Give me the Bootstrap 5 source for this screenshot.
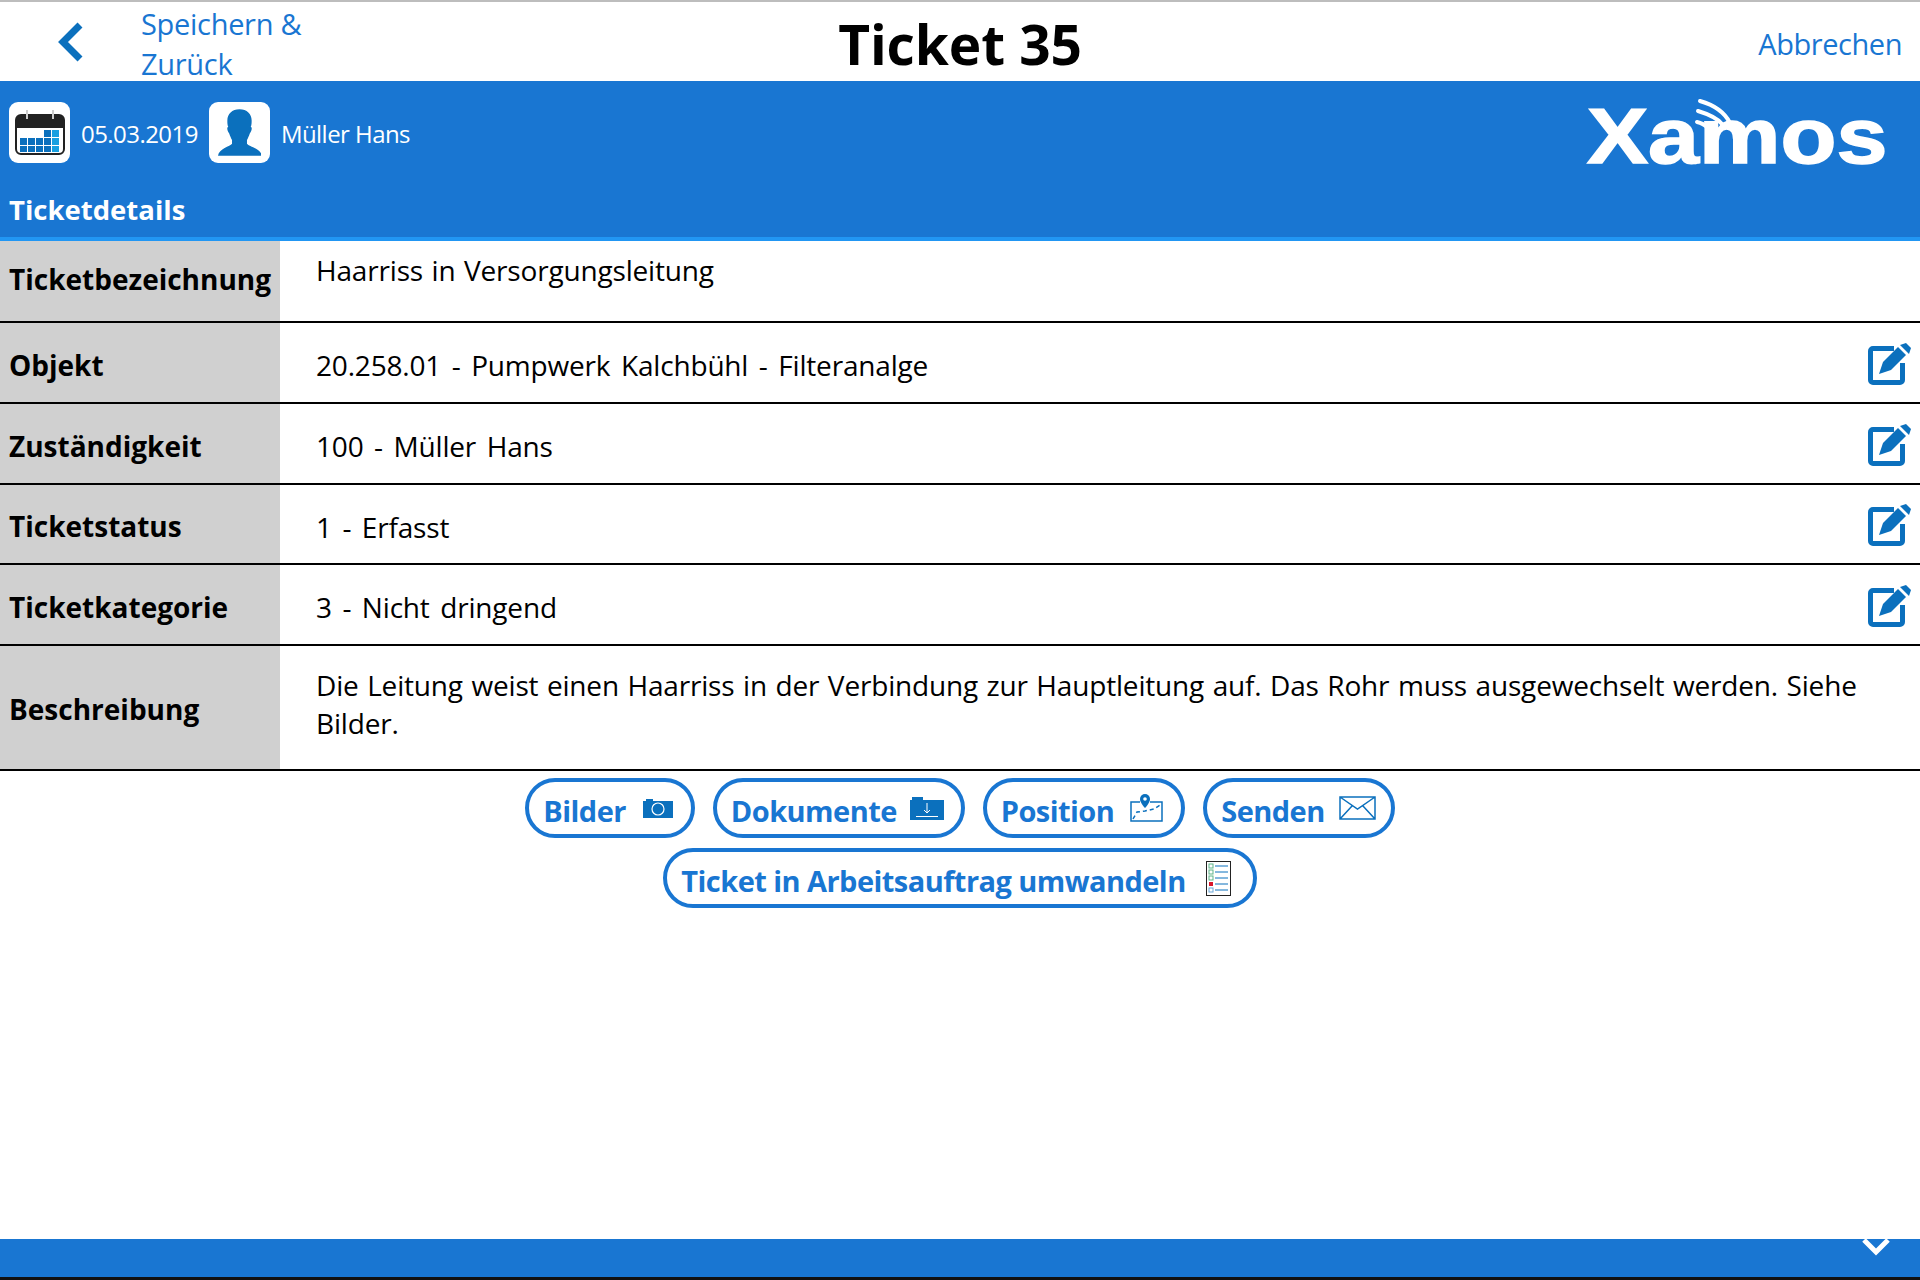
<!DOCTYPE html>
<html lang="de"><head><meta charset="utf-8"><title>Ticket 35</title>
<link href="https://cdn.jsdelivr.net/npm/bootstrap@5.3.0/dist/css/bootstrap.min.css" rel="stylesheet">
<style>
body{font-family:"Open Sans","Noto Sans","Liberation Sans",sans-serif;color:#000;background:#fff;height:1280px;overflow:hidden}
.app-shell{height:1280px;border-top:2px solid #bdbdbd;border-bottom:3px solid #111}
.top-bar{height:79px;flex:none}
.side-left,.side-right{width:420px;flex:none}
.back-zone{width:141px;padding-left:57px;flex:none}
.save-link{width:240px;font-size:29px;line-height:40px;color:#1976d2;text-decoration:none;margin-top:4px;letter-spacing:-.3px}
.cancel-link{font-size:29px;color:#1976d2;text-decoration:none;letter-spacing:-.45px;padding-right:18px;margin-top:4px;display:block;text-align:right}
.page-title{font-size:55px;font-weight:700;margin:4px 0 0;line-height:1;text-align:center;font-family:"Open Sans",sans-serif;letter-spacing:-.1px}
.blue-band{background:#1976d2;height:160px;border-bottom:4px solid #2196f3;color:#fff;flex:none}
.info-row{height:102px;padding:21px 34px 0 9px}
.tile{width:61px;height:61px;background:#fff;border-radius:9px}
.info-text{font-size:24px;margin:2px 11px 0 11px;letter-spacing:-.55px}
.logo-mark{margin-top:-3px;overflow:visible}
.section-title{font-size:27.500px;font-weight:700;padding:9px 0 0 9px;line-height:36px}
.detail-line{border-bottom:2px solid #000;flex:none}
.label-cell{width:280px;background:#d0d0d0;font-size:28px;font-weight:700;padding:4px 0 0 9px;flex:none}
.label-top{padding:0 0 4px 9px}
.label-desc{padding-top:2px}
.value-cell{font-size:28px;padding:0 8px 0 36px;line-height:38px;word-spacing:1.500px;letter-spacing:-.18px}
.value-top{padding-top:10px}
.value-desc{padding-bottom:7px;padding-right:10px}
.value-lift{margin-top:5px;word-spacing:3.500px}
.h-82{height:82px}.h-81{height:81px}.h-80{height:80px}.h-125{height:125px}
.action-btn{height:60px;border:4px solid #1976d2;border-radius:30px;color:#1976d2;font-size:29px;font-weight:700;padding:0 0 0 14px;background:#fff;letter-spacing:-.55px}
.action-btn span{margin-top:5px}
.btn-row{gap:18px}
.btn-stack{padding-top:7px;gap:10px}
.ico-cam{margin:0 18px 0 17px}
.ico-doc{margin:0 17px 0 13px}
.ico-pos{margin:0 18px 0 16px}
.ico-mail{margin:0 15px 0 14px}
.ico-list{margin:0 22px 0 20px}
.foot-band{background:#1976d2;height:38px;flex:none}
.chev{margin-right:29px}
</style></head>
<body>
<div class="app-shell d-flex flex-column">
  <div class="top-bar d-flex align-items-center">
    <div class="side-left d-flex align-items-center">
      <div class="back-zone"><svg width="30" height="40" viewBox="0 0 30 40" class="d-block"><path d="M23 3 6 20l17 17" fill="none" stroke="#0b70bd" stroke-width="7"/></svg></div>
      <a class="save-link" href="#">Speichern &amp; Zurück</a>
    </div>
    <h1 class="page-title flex-grow-1">Ticket 35</h1>
    <div class="side-right"><a class="cancel-link" href="#">Abbrechen</a></div>
  </div>

  <div class="blue-band">
    <div class="info-row d-flex align-items-start justify-content-between">
      <div class="d-flex align-items-center">
        <div class="tile d-flex align-items-center justify-content-center">
          <svg width="50" height="45" viewBox="0 0 50 45"><rect x="1" y="5" width="48" height="39" rx="5" fill="#fff" stroke="#222" stroke-width="2"/><path d="M1 10a5 5 0 0 1 5-5h38a5 5 0 0 1 5 5v8H1z" fill="#222"/><path d="M12 0v9M38 0v9" stroke="#ccc" stroke-width="2"/><g fill="#0b70bd"><rect x="5" y="28" width="7" height="7"/><rect x="13" y="28" width="7" height="7"/><rect x="21" y="28" width="7" height="7"/><rect x="29" y="28" width="7" height="7"/><rect x="5" y="36" width="7" height="6"/><rect x="13" y="36" width="7" height="6"/><rect x="21" y="36" width="7" height="6"/><rect x="29" y="36" width="7" height="6"/><rect x="29" y="20" width="7" height="7"/></g><g fill="#17a0e0"><rect x="37" y="20" width="7" height="7"/><rect x="37" y="28" width="7" height="7"/><rect x="37" y="36" width="7" height="6"/></g></svg>
        </div>
        <span class="info-text">05.03.2019</span>
        <div class="tile d-flex align-items-center justify-content-center">
          <svg width="43" height="49" viewBox="0 0 46 50"><path d="M23 0c8 0 13 5 13 12 0 3 0 5-1 7 2 0 1 5-1 7-1 3-2 5-3 7v4c2 3 15 5 16 13H0c1-8 13-10 15-13v-4c-1-2-2-4-3-7-2-2-3-7-1-7-1-2-1-4-1-7C10 5 15 0 23 0z" fill="#0b70bd"/></svg>
        </div>
        <span class="info-text">Müller Hans</span>
      </div>
      <svg width="299" height="76" viewBox="0 0 299 76" class="logo-mark">
        <text transform="scale(1.190 1)" x="0" y="64" font-family="Liberation Sans" font-weight="700" font-size="77" stroke="#fff" stroke-width="1.500" fill="#fff">Xamos</text>
        <g fill="none" stroke="#fff" stroke-width="4" stroke-linecap="round"><path d="M113 2c14 4 25 12 30 22"/><path d="M111 12c10 3 18 6 24 13"/><path d="M110 23c5 1 8 3 11 6"/></g>
      </svg>
    </div>
    <div class="section-title">Ticketdetails</div>
  </div>

  <div class="detail-line d-flex h-82"><div class="label-cell label-top d-flex align-items-center">Ticketbezeichnung</div><div class="value-cell value-top flex-grow-1">Haarriss in Versorgungsleitung</div></div>
  <div class="detail-line d-flex h-81"><div class="label-cell d-flex align-items-center">Objekt</div><div class="value-cell flex-grow-1 d-flex align-items-center justify-content-between"><span class="value-lift">20.258.01 - Pumpwerk Kalchbühl - Filteranalge</span><svg width="44" height="44" viewBox="0 0 44 44"><path d="M26 7.500H5a2.500 2.500 0 0 0-2.500 2.500v29a2.500 2.500 0 0 0 2.500 2.500h27a2.500 2.500 0 0 0 2.500-2.500V22" fill="none" stroke="#0b70bd" stroke-width="5"/><path d="M11 33l4-12L30 6l8 8-15 15z" fill="#0b70bd"/><path d="M32 4l6-2 5 5-2 6z" fill="#0b70bd"/></svg></div></div>
  <div class="detail-line d-flex h-81"><div class="label-cell d-flex align-items-center">Zuständigkeit</div><div class="value-cell flex-grow-1 d-flex align-items-center justify-content-between"><span class="value-lift">100 - Müller Hans</span><svg width="44" height="44" viewBox="0 0 44 44"><path d="M26 7.500H5a2.500 2.500 0 0 0-2.500 2.500v29a2.500 2.500 0 0 0 2.500 2.500h27a2.500 2.500 0 0 0 2.500-2.500V22" fill="none" stroke="#0b70bd" stroke-width="5"/><path d="M11 33l4-12L30 6l8 8-15 15z" fill="#0b70bd"/><path d="M32 4l6-2 5 5-2 6z" fill="#0b70bd"/></svg></div></div>
  <div class="detail-line d-flex h-80"><div class="label-cell d-flex align-items-center">Ticketstatus</div><div class="value-cell flex-grow-1 d-flex align-items-center justify-content-between"><span class="value-lift">1 - Erfasst</span><svg width="44" height="44" viewBox="0 0 44 44"><path d="M26 7.500H5a2.500 2.500 0 0 0-2.500 2.500v29a2.500 2.500 0 0 0 2.500 2.500h27a2.500 2.500 0 0 0 2.500-2.500V22" fill="none" stroke="#0b70bd" stroke-width="5"/><path d="M11 33l4-12L30 6l8 8-15 15z" fill="#0b70bd"/><path d="M32 4l6-2 5 5-2 6z" fill="#0b70bd"/></svg></div></div>
  <div class="detail-line d-flex h-81"><div class="label-cell d-flex align-items-center">Ticketkategorie</div><div class="value-cell flex-grow-1 d-flex align-items-center justify-content-between"><span class="value-lift">3 - Nicht dringend</span><svg width="44" height="44" viewBox="0 0 44 44"><path d="M26 7.500H5a2.500 2.500 0 0 0-2.500 2.500v29a2.500 2.500 0 0 0 2.500 2.500h27a2.500 2.500 0 0 0 2.500-2.500V22" fill="none" stroke="#0b70bd" stroke-width="5"/><path d="M11 33l4-12L30 6l8 8-15 15z" fill="#0b70bd"/><path d="M32 4l6-2 5 5-2 6z" fill="#0b70bd"/></svg></div></div>
  <div class="detail-line d-flex h-125"><div class="label-cell label-desc d-flex align-items-center">Beschreibung</div><div class="value-cell value-desc flex-grow-1 d-flex align-items-center">Die Leitung weist einen Haarriss in der Verbindung zur Hauptleitung auf. Das Rohr muss ausgewechselt werden. Siehe Bilder.</div></div>

  <div class="btn-stack d-flex flex-column align-items-center flex-grow-1">
    <div class="d-flex btn-row">
      <button class="btn action-btn d-flex align-items-center"><span>Bilder</span><svg class="ico-cam" width="30" height="20" viewBox="0 0 30 20"><path d="M0 3h3V1h7v2h20v17H0z" fill="#0b70bd"/><circle cx="15" cy="11" r="6" fill="#0b70bd" stroke="#fff" stroke-width="1.200"/></svg></button>
      <button class="btn action-btn d-flex align-items-center"><span>Dokumente</span><svg class="ico-doc" width="34" height="23" viewBox="0 0 34 23"><path d="M0 3h2V0h11v3h21v20H0z" fill="#0b70bd"/><path d="M17 6v10m-3-3 3 3 3-3M6 19.500h22" stroke="#fff" fill="none"/></svg></button>
      <button class="btn action-btn d-flex align-items-center"><span>Position</span><svg class="ico-pos" width="33" height="28" viewBox="0 0 33 28"><path d="M20 8h12v19H1V8h9" fill="none" stroke="#0b70bd" stroke-width="1.500"/><path d="M3 25l4-7 8-1 9-2 6-4" fill="none" stroke="#0b70bd" stroke-width="1.500" stroke-dasharray="4 3"/><path d="M15 0a5 5 0 0 1 5 5c0 4-5 9-5 9s-5-5-5-9a5 5 0 0 1 5-5z" fill="#0b70bd"/><circle cx="15" cy="5" r="1.800" fill="#fff"/></svg></button>
      <button class="btn action-btn d-flex align-items-center"><span>Senden</span><svg class="ico-mail" width="37" height="24" viewBox="0 0 37 24"><path d="M1 1h35v22H1zM1 1l17.500 12L36 1M1 23l12-13M36 23 24 10" fill="none" stroke="#0b70bd" stroke-width="1.500"/></svg></button>
    </div>
    <button class="btn action-btn d-flex align-items-center"><span>Ticket in Arbeitsauftrag umwandeln</span><svg class="ico-list" width="25" height="35" viewBox="0 0 25 35"><rect x=".5" y=".5" width="24" height="34" fill="#fff" stroke="#222"/><g fill="none" stroke="#0b70bd" stroke-width="1"><path d="M9 5h13M9 11h13M9 17h13M9 23h13M9 29h13"/></g><g fill="#fff" stroke="#5fb58a"><rect x="3" y="3" width="4" height="4"/><rect x="3" y="9" width="4" height="4"/><rect x="3" y="15" width="4" height="4"/></g><rect x="3" y="21" width="4" height="4" fill="#d8162c"/><rect x="3" y="27" width="4" height="4" fill="#fff" stroke="#6aa7d8"/></svg></button>
  </div>

  <div class="foot-band d-flex justify-content-end align-items-start"><svg class="chev" width="30" height="18" viewBox="0 0 30 18"><path d="M3 1l12 12L27 1" fill="none" stroke="#fff" stroke-width="5"/></svg></div>
</div>
<script src="https://cdn.jsdelivr.net/npm/bootstrap@5.3.0/dist/js/bootstrap.bundle.min.js"></script>
</body></html>
